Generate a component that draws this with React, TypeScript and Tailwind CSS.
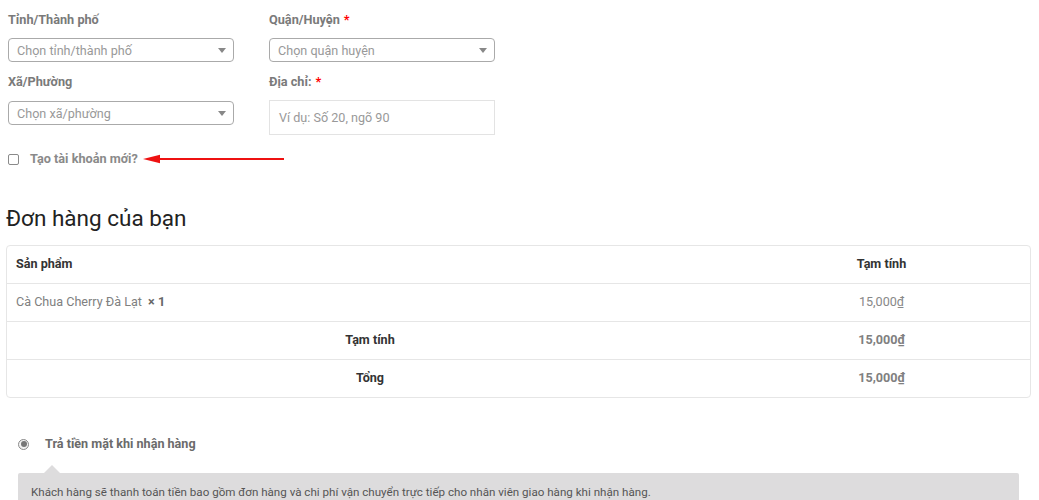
import React from "react";

const FONT = { fontFamily: "Roboto, 'Noto Sans', 'Liberation Sans', sans-serif" };

function Label({ text, required }: { text: string; required?: boolean }) {
  return (
    <div className="h-[20px] text-[12.7px] leading-[20px] font-bold text-[#7a7a7a]">
      {text}
      {required && <span className="ml-1 text-[#ff0000]">*</span>}
    </div>
  );
}

function Select({ placeholder }: { placeholder: string }) {
  return (
    <div className="flex h-[24px] items-center justify-between rounded-[4px] border border-[#aaaaaa] bg-white pl-[8px] pr-[7px]">
      <span className="pt-[3px] text-[12.6px] text-[#999999]">{placeholder}</span>
      <span className="h-0 w-0 border-x-[4px] border-t-[5px] border-x-transparent border-t-[#888888]" />
    </div>
  );
}

function RedArrow() {
  return (
    <svg width="142" height="10" viewBox="0 0 142 10" className="ml-[5px]">
      <line x1="14" y1="5" x2="141" y2="5" stroke="#ee1111" strokeWidth="2.2" />
      <polygon points="0,5 17,0.8 17,9.2" fill="#ee1111" />
    </svg>
  );
}

export default function App() {
  const rows = [
    { label: "Tạm tính", value: "15,000₫" },
    { label: "Tổng", value: "15,000₫" },
  ];

  return (
    <div className="min-h-[500px] bg-white px-[6px] pt-[10px]" style={FONT}>
      {/* address form */}
      <div className="ml-[2px] grid w-[487px] grid-cols-[226px_226px] gap-x-[35px]">
        <div>
          <Label text="Tỉnh/Thành phố" />
          <div className="mt-[8px]">
            <Select placeholder="Chọn tỉnh/thành phố" />
          </div>
        </div>
        <div>
          <Label text="Quận/Huyện" required />
          <div className="mt-[8px]">
            <Select placeholder="Chọn quận huyện" />
          </div>
        </div>
        <div className="mt-[10px]">
          <Label text="Xã/Phường" />
          <div className="mt-[9px]">
            <Select placeholder="Chọn xã/phường" />
          </div>
        </div>
        <div className="mt-[10px]">
          <Label text="Địa chỉ:" required />
          <div className="mt-[8px] flex h-[35px] items-center border border-[#e3e3e3] pl-[9px] pt-[2px] text-[12.6px] text-[#999999]">
            Ví dụ: Số 20, ngõ 90
          </div>
        </div>
      </div>

      <div className="ml-[2px] mt-[18px] flex h-[12px] items-center">
        <span className="h-[11px] w-[11px] rounded-[2px] border border-[#8a8a8a] bg-white" />
        <span className="ml-[11px] text-[12.7px] font-bold text-[#8a8a8a]">Tạo tài khoản mới?</span>
        <RedArrow />
      </div>

      <h2 className="mt-[38px] text-[22.5px] leading-[30px] font-normal text-[#222222]">Đơn hàng của bạn</h2>

      <div className="mt-[12px] w-[1025px] overflow-hidden rounded-[4px] border border-[#e6e6e6] text-[12.6px]">
        <div className="flex h-[37px] items-center pb-[1px]">
          <div className="flex-1 pl-[9px] font-bold text-[#333333]">Sản phẩm</div>
          <div className="w-[297px] text-center font-bold text-[#333333]">Tạm tính</div>
        </div>
        <div className="flex h-[38px] items-center border-t border-[#e6e6e6] pb-[1px]">
          <div className="flex-1 pl-[9px] text-[#808080]">
            Cà Chua Cherry Đà Lạt <span className="ml-[3px] font-bold text-[#666666]">× 1</span>
          </div>
          <div className="w-[297px] text-center text-[#888888]">15,000₫</div>
        </div>
        {rows.map((r) => (
          <div key={r.label} className="flex h-[38px] items-center border-t border-[#e6e6e6] pb-[1px]">
            <div className="flex-1 text-center font-bold text-[#333333]">{r.label}</div>
            <div className="w-[297px] text-center font-bold text-[#808080]">{r.value}</div>
          </div>
        ))}
      </div>

      {/* payment */}
      <div className="ml-[12px] mt-[37px] flex items-center">
        <span className="flex h-[11px] w-[11px] items-center justify-center rounded-full border border-[#8a8a8a] bg-[#f2f2f2]">
          <span className="h-[6px] w-[6px] rounded-full bg-[#777777]" />
        </span>
        <span className="ml-[16px] text-[12.6px] font-bold text-[#6b6b6b]">Trả tiền mặt khi nhận hàng</span>
      </div>

      <div className="relative ml-[12px] mt-[19px] w-[1001px] rounded-t-[2px] bg-[#dddcdd] px-[13px] pb-[10px] pt-[11px] text-[11.6px] text-[#555555]">
        <span className="absolute left-[26px] top-[-8px] h-0 w-0 border-x-[8px] border-b-[8px] border-x-transparent border-b-[#dddcdd]" />
        Khách hàng sẽ thanh toán tiền bao gồm đơn hàng và chi phí vận chuyển trực tiếp cho nhân viên giao hàng khi nhận hàng.
      </div>
    </div>
  );
}
